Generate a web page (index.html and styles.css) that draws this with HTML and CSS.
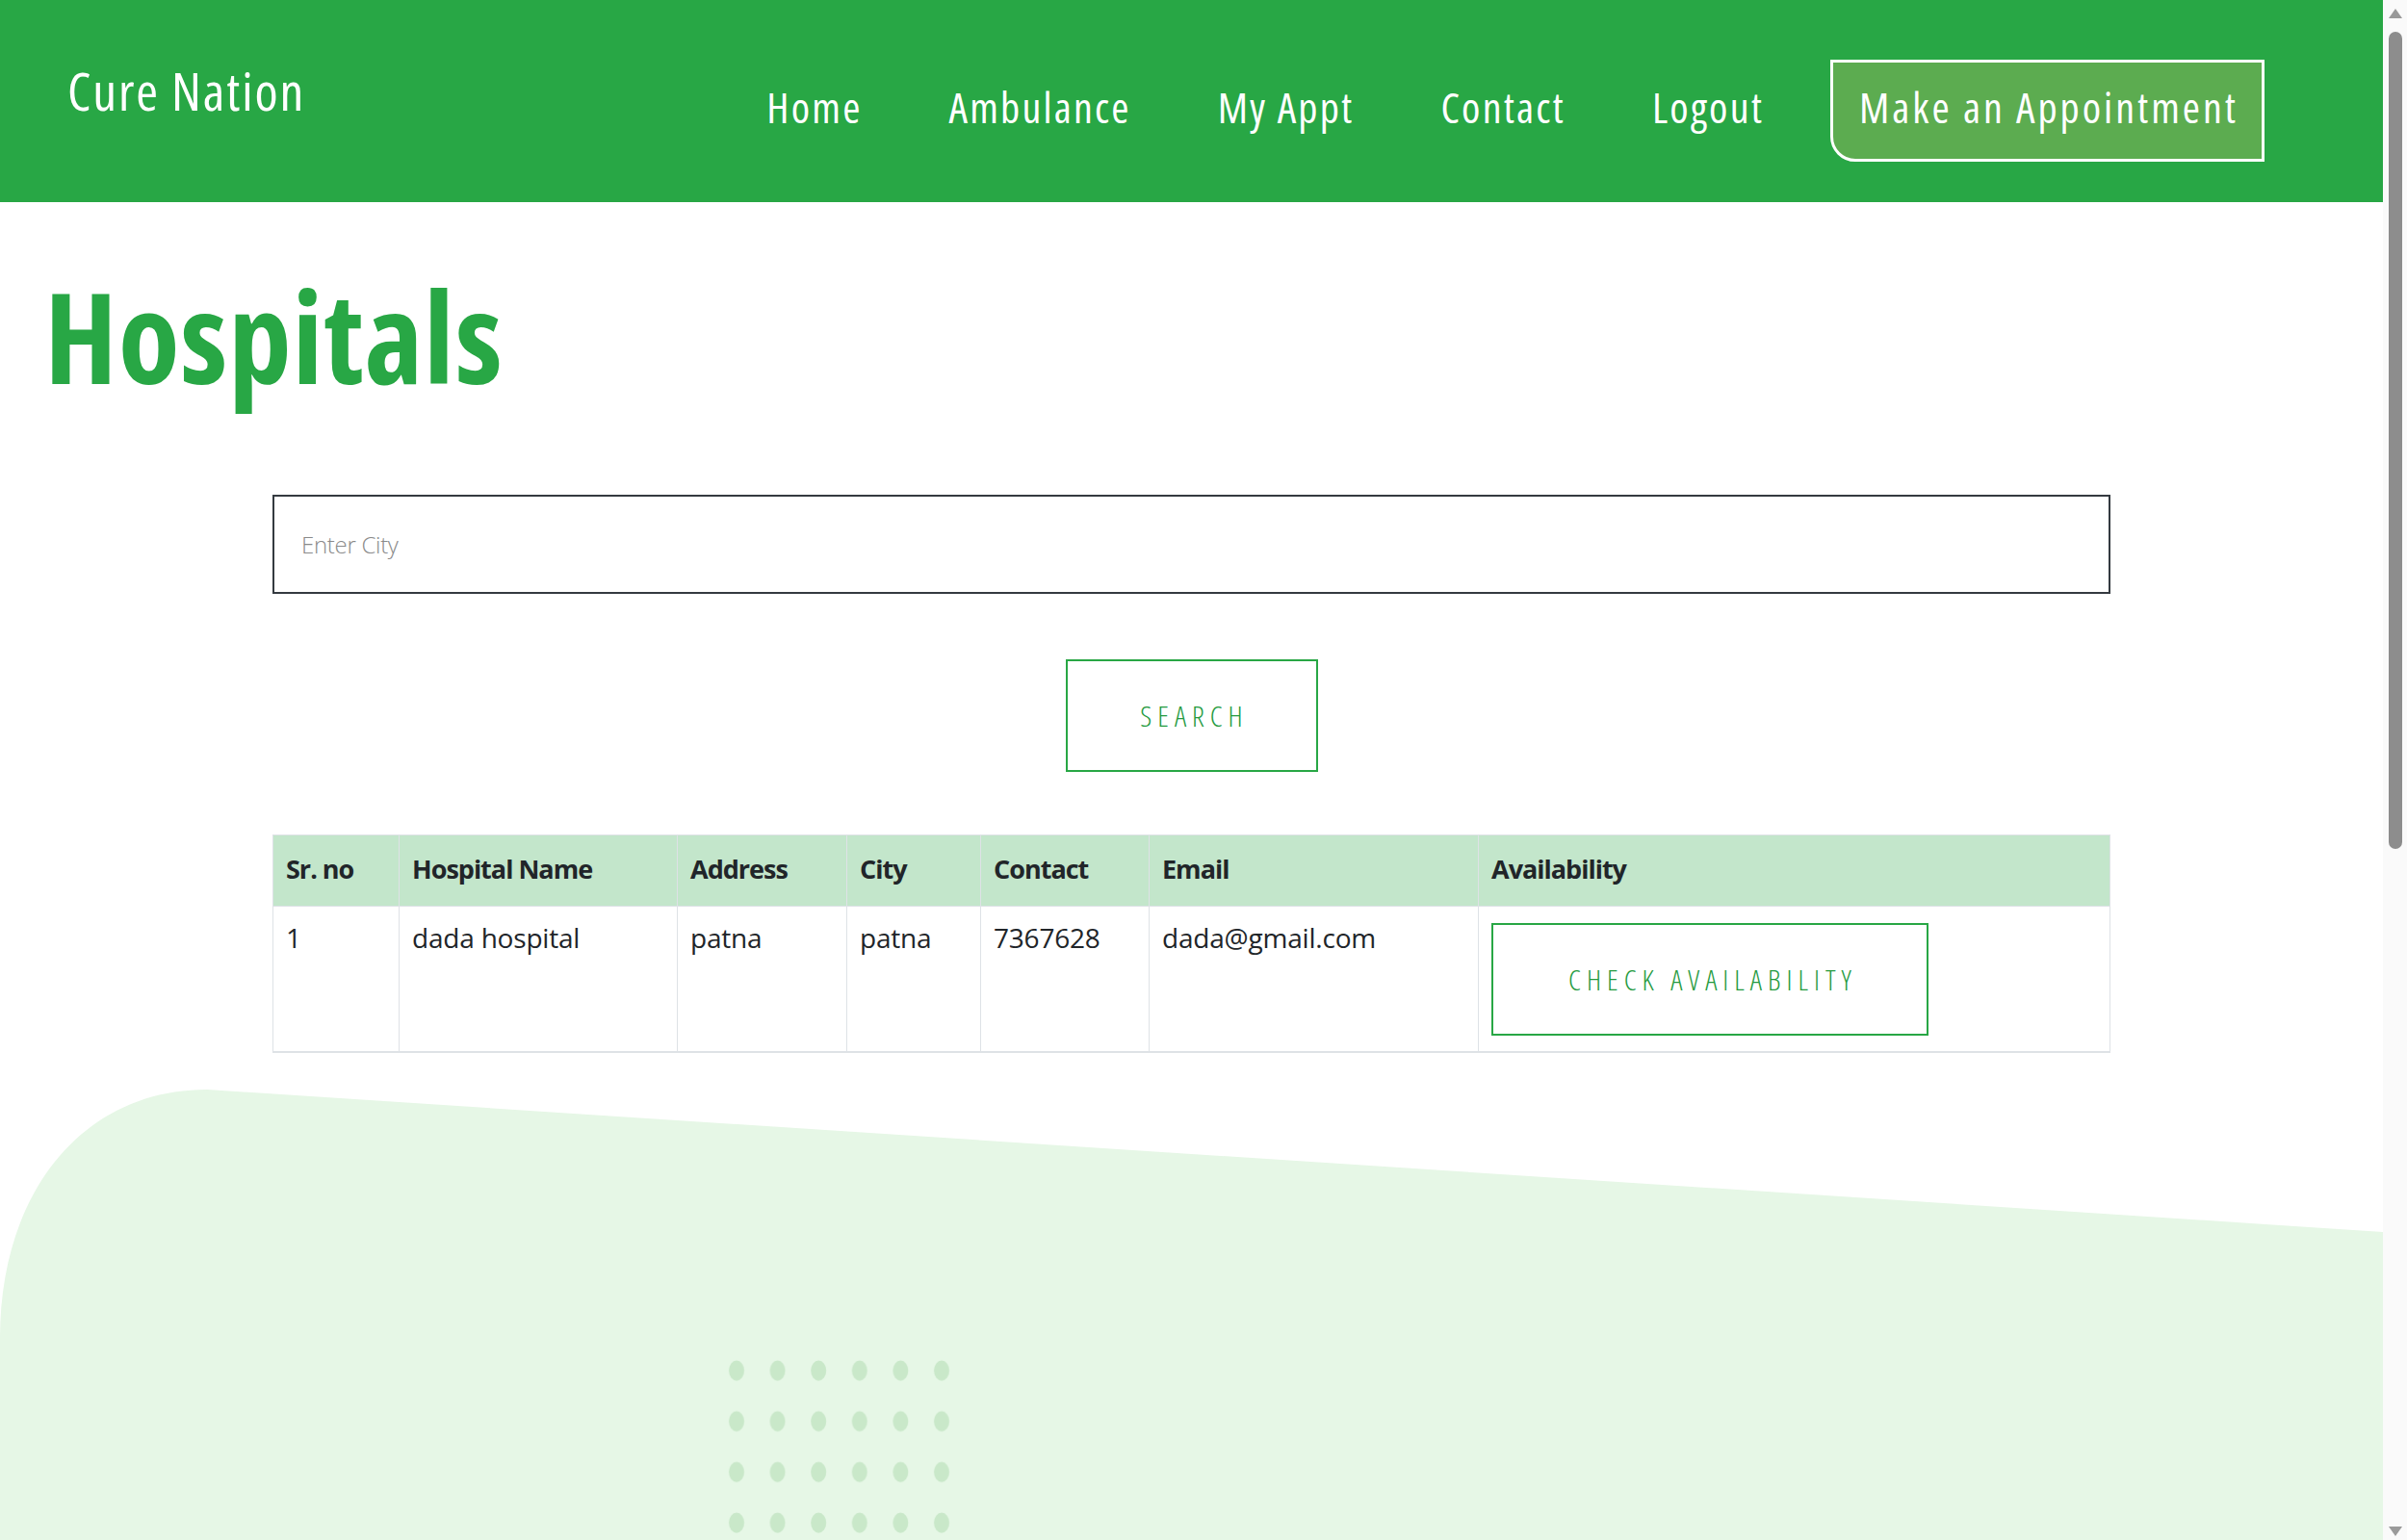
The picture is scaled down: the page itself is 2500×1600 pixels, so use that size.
FILE: index.html
```html
<!DOCTYPE html>
<html lang="en">
<head>
<meta charset="utf-8">
<title>Hospitals - Cure Nation</title>
<link rel="stylesheet" href="styles.css">
</head>
<body>
<div class="screen">
  <div class="page">
    <header class="topbar">
      <a class="brand" href="#">Cure Nation</a>
      <nav class="nav">
        <a class="nav-link" href="#">Home</a>
        <a class="nav-link" href="#">Ambulance</a>
        <a class="nav-link" href="#">My Appt</a>
        <a class="nav-link" href="#">Contact</a>
        <a class="nav-link" href="#">Logout</a>
        <a class="cta" href="#">Make an Appointment</a>
      </nav>
    </header>

    <main class="content">
      <h1 class="title">Hospitals</h1>
      <form class="search">
        <input class="city" type="text" placeholder="Enter City">
        <button class="btn-outline search-btn" type="button">Search</button>
      </form>
      <div class="table-wrap">
        <table class="hosp">
          <colgroup>
            <col class="c1"><col class="c2"><col class="c3"><col class="c4"><col class="c5"><col class="c6"><col class="c7">
          </colgroup>
          <thead>
            <tr>
              <th>Sr. no</th>
              <th>Hospital Name</th>
              <th>Address</th>
              <th>City</th>
              <th>Contact</th>
              <th>Email</th>
              <th>Availability</th>
            </tr>
          </thead>
          <tbody>
            <tr>
              <td>1</td>
              <td>dada hospital</td>
              <td>patna</td>
              <td>patna</td>
              <td>7367628</td>
              <td>dada@gmail.com</td>
              <td><button class="btn-outline avail-btn" type="button">Check Availability</button></td>
            </tr>
          </tbody>
        </table>
      </div>
    </main>

    <svg class="decor" viewBox="0 0 2475 520" width="2475" height="520" aria-hidden="true">
      <defs>
        <pattern id="dots" x="744" y="323" width="42.6" height="52.7" patternUnits="userSpaceOnUse">
          <ellipse cx="21" cy="21" rx="8" ry="10.5" fill="#c9e8c9"/>
        </pattern>
      </defs>
      <path d="M0 520 L0 310 C0 160 85 52 215 52 L2475 200 L2475 520 Z" fill="#e6f7e6"/>
      <rect x="744" y="323" width="256" height="197" fill="url(#dots)"/>
    </svg>
  </div>

  <aside class="scrollbar" aria-hidden="true">
    <span class="sb-up"></span>
    <span class="sb-thumb"></span>
    <span class="sb-down"></span>
  </aside>
</div>
</body>
</html>
```

FILE: styles.css
```css
* {
  box-sizing: border-box;
}

html,
body {
  margin: 0;
  padding: 0;
}

body {
  font-family: "Open Sans", "Liberation Sans", sans-serif;
  background: #ffffff;
  color: #212529;
}

.screen {
  display: flex;
  width: 2500px;
  height: 1600px;
  overflow: hidden;
}

.page {
  position: relative;
  width: 2475px;
  height: 1600px;
  overflow: hidden;
  background: #ffffff;
}

/* ---------- header ---------- */
.topbar {
  display: flex;
  align-items: flex-start;
  height: 210px;
  padding: 0 123px 0 70px;
  background: #28a745;
}

.brand {
  margin-top: 66px;
  font-size: 55px;
  line-height: 1;
  font-weight: 500;
  font-stretch: 75%;
  letter-spacing: 1.9px;
  color: #ffffff;
  text-decoration: none;
}

.nav {
  display: flex;
  align-items: flex-start;
  margin-left: auto;
  margin-top: 62px;
}

.nav-link {
  margin-top: 27px;
  padding: 0 45px;
  font-size: 44px;
  line-height: 1;
  font-weight: 400;
  font-stretch: 75%;
  letter-spacing: 2.2px;
  color: #ffffff;
  text-decoration: none;
}

.cta {
  margin-left: 24px;
  padding: 24px 24px 32px 27px;
  font-size: 44px;
  line-height: 1;
  font-weight: 400;
  font-stretch: 75%;
  letter-spacing: 3px;
  color: #ffffff;
  text-decoration: none;
  background: #5cac50;
  border: 3px solid #ffffff;
  border-radius: 0 0 0 26px;
}

/* ---------- content ---------- */
.content {
  position: relative;
  z-index: 1;
  padding-top: 73px;
}

.title {
  margin: 0 0 100px;
  padding-left: 46px;
  font-size: 131px;
  line-height: 1;
  font-weight: 700;
  font-stretch: 75%;
  letter-spacing: 0.8px;
  color: #28a745;
}

.search {
  display: flex;
  flex-direction: column;
  align-items: center;
  gap: 68px;
  margin: 0;
}

.city {
  width: 1909px;
  height: 103px;
  padding: 0 28px;
  border: 2px solid #343a40;
  font-family: "Open Sans", "Liberation Sans", sans-serif;
  font-size: 24px;
  font-weight: 300;
  letter-spacing: -0.3px;
  color: #495057;
  background: #ffffff;
  outline: none;
}

.city::placeholder {
  color: #8a8a8a;
}

.btn-outline {
  display: block;
  padding: 41px 0 41px 6px;
  border: 2px solid #28a745;
  background: transparent;
  font-family: "Open Sans", "Liberation Sans", sans-serif;
  font-size: 30px;
  line-height: 31px;
  font-weight: 300;
  font-stretch: 75%;
  letter-spacing: 6px;
  text-transform: uppercase;
  text-align: center;
  color: #249a3e;
}

.search-btn {
  width: 262px;
}

.table-wrap {
  display: flex;
  justify-content: center;
  margin-top: 65px;
}

.hosp {
  width: 1909px;
  border-collapse: collapse;
  table-layout: fixed;
  font-size: 28px;
}

.c1 { width: 131px; }
.c2 { width: 289px; }
.c3 { width: 176px; }
.c4 { width: 139px; }
.c5 { width: 175px; }
.c6 { width: 342px; }
.c7 { width: 656px; }

.hosp th,
.hosp td {
  border: 1px solid #dee2e6;
  text-align: left;
  line-height: 31px;
}

.hosp th {
  padding: 19px 13px 23px;
  background: #c3e6cb;
  font-size: 27px;
  font-weight: 700;
  letter-spacing: -1px;
  color: #212529;
}

.hosp td {
  padding: 17px 13px 16px;
  vertical-align: top;
  font-weight: 400;
  letter-spacing: -0.2px;
  color: #212529;
}

.hosp tbody tr {
  border-bottom: 2px solid #dee2e6;
}

.avail-btn {
  width: 454px;
}

/* ---------- decoration ---------- */
.decor {
  position: absolute;
  left: 0;
  top: 1080px;
  z-index: 0;
  display: block;
}

/* ---------- scrollbar ---------- */
.scrollbar {
  display: flex;
  flex-direction: column;
  align-items: center;
  width: 25px;
  height: 1600px;
  background: #fafafa;
}

.sb-up {
  margin-top: 9px;
  width: 0;
  height: 0;
  border-left: 7px solid transparent;
  border-right: 7px solid transparent;
  border-bottom: 10px solid #9a9a9a;
}

.sb-thumb {
  margin-top: 14px;
  width: 14px;
  height: 849px;
  border-radius: 7px;
  background: #8d8d8d;
}

.sb-down {
  margin-top: auto;
  margin-bottom: 4px;
  width: 0;
  height: 0;
  border-left: 7px solid transparent;
  border-right: 7px solid transparent;
  border-top: 10px solid #9a9a9a;
}
```
